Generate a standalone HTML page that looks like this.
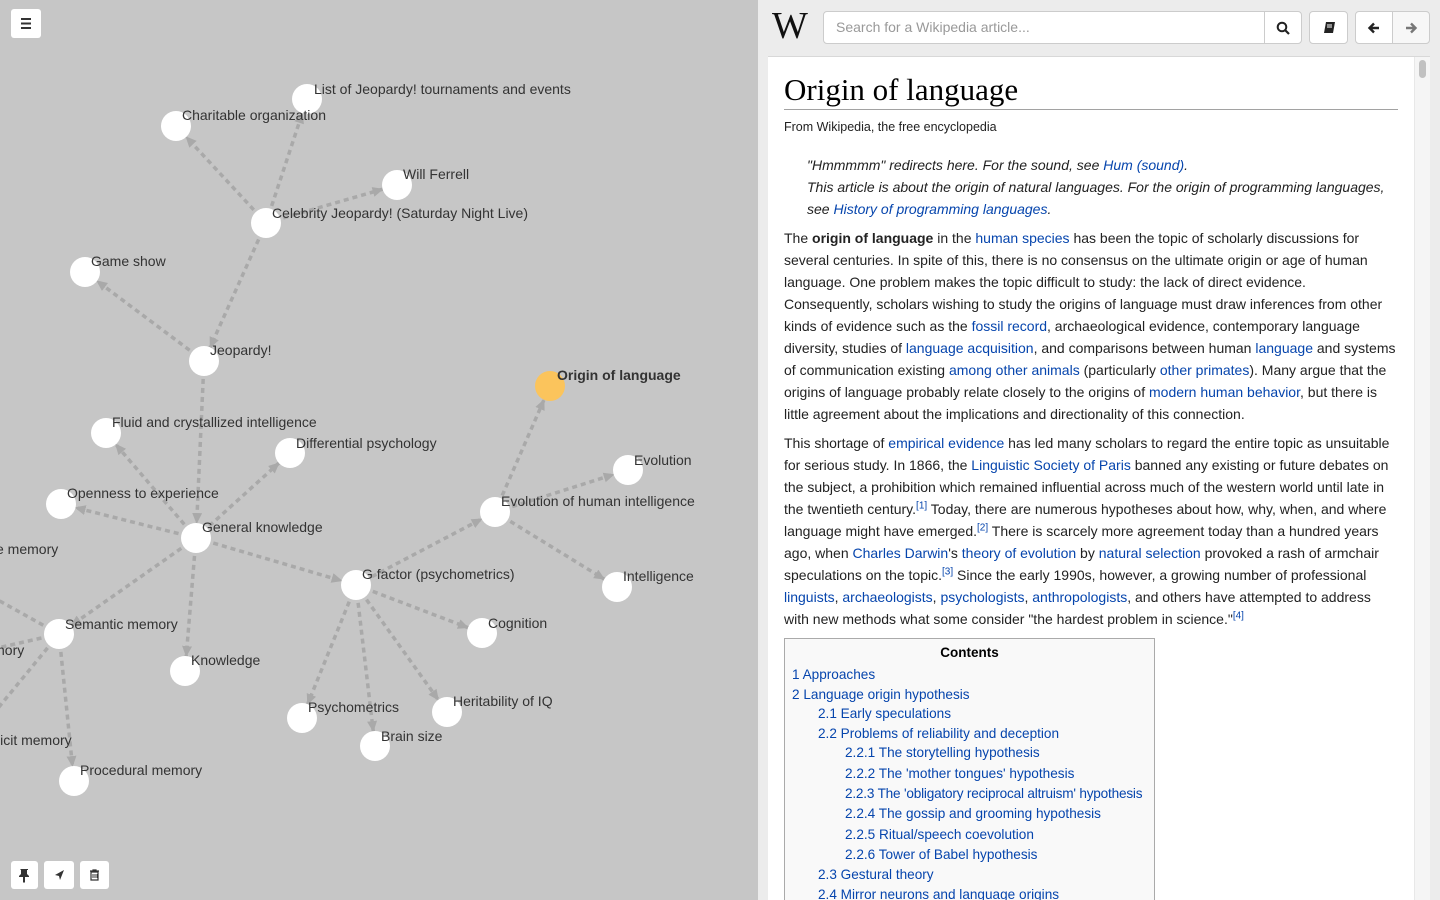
<!DOCTYPE html>
<html><head><meta charset="utf-8"><style>
*{margin:0;padding:0;box-sizing:border-box}
body{width:1440px;height:900px;overflow:hidden;font-family:"Liberation Sans",sans-serif;background:#ececec;position:relative}
#graph{position:absolute;left:0;top:0;width:758px;height:900px;background:#c6c6c6;overflow:hidden}
.btn{position:absolute;background:#fff;border-radius:3px}
#right{position:absolute;left:758px;top:0;width:682px;height:900px;background:#ececec}
.search{position:absolute;left:823px;top:11px;width:442px;height:33px;border:1px solid #ccc;border-radius:4px 0 0 4px;background:#fff;font-size:14px;color:#999;padding:7px 12px}
.tb{position:absolute;top:11px;height:33px;border:1px solid #ccc;background:#fff;display:flex;align-items:center;justify-content:center}
#page{position:absolute;left:768px;top:56px;width:662px;height:844px;background:#fff;border-top:1px solid #d8d8d8;overflow:hidden}
.c{position:absolute;left:16px;font-size:14px;color:#222;white-space:nowrap}
.l{line-height:22px}
a{color:#0645ad;text-decoration:none}
sup{font-size:10px;line-height:0}
h1{position:absolute;left:16px;top:15px;font-family:"Liberation Serif",serif;font-weight:normal;font-size:31px;color:#000}
.toc{position:absolute;left:16px;top:581px;width:371px;height:300px;background:#f9f9f9;border:1px solid #aaa;font-size:13.6px}
.toc div{position:absolute;white-space:nowrap}
</style></head><body>
<div id="graph">
<svg width="758" height="900" style="position:absolute;left:0;top:0">
<defs><marker id="a" markerUnits="userSpaceOnUse" markerWidth="12" markerHeight="12" refX="25" refY="5" orient="auto"><path d="M0,0L11,5L0,10z" fill="#a9a9a9"/></marker></defs>
<g stroke="#a9a9a9" stroke-width="3.5" stroke-dasharray="5,4" fill="none" marker-end="url(#a)">
<line x1="266" y1="223" x2="307" y2="99"/>
<line x1="266" y1="223" x2="176" y2="126"/>
<line x1="266" y1="223" x2="397" y2="185"/>
<line x1="266" y1="223" x2="204" y2="361"/>
<line x1="204" y1="361" x2="85" y2="272"/>
<line x1="204" y1="361" x2="196" y2="538"/>
<line x1="196" y1="538" x2="106" y2="433"/>
<line x1="196" y1="538" x2="290" y2="453"/>
<line x1="196" y1="538" x2="61" y2="504"/>
<line x1="196" y1="538" x2="356" y2="585"/>
<line x1="196" y1="538" x2="185" y2="671"/>
<line x1="196" y1="538" x2="59" y2="634"/>
<line x1="356" y1="585" x2="495" y2="512"/>
<line x1="495" y1="512" x2="550" y2="386"/>
<line x1="495" y1="512" x2="628" y2="470"/>
<line x1="495" y1="512" x2="617" y2="587"/>
<line x1="356" y1="585" x2="482" y2="633"/>
<line x1="356" y1="585" x2="302" y2="718"/>
<line x1="356" y1="585" x2="447" y2="712"/>
<line x1="356" y1="585" x2="375" y2="746"/>
<line x1="59" y1="634" x2="74" y2="781"/>
</g>
<g stroke="#a9a9a9" stroke-width="3.5" stroke-dasharray="5,4">
<line x1="59" y1="634" x2="-20" y2="590"/>
<line x1="59" y1="634" x2="-20" y2="652"/>
<line x1="59" y1="634" x2="-20" y2="730"/>
</g>
<g fill="#fff">
<circle cx="307" cy="99" r="15"/><circle cx="176" cy="126" r="15"/><circle cx="397" cy="185" r="15"/><circle cx="266" cy="223" r="15"/><circle cx="85" cy="272" r="15"/><circle cx="204" cy="361" r="15"/><circle cx="106" cy="433" r="15"/><circle cx="290" cy="453" r="15"/><circle cx="628" cy="470" r="15"/><circle cx="61" cy="504" r="15"/><circle cx="495" cy="512" r="15"/><circle cx="196" cy="538" r="15"/><circle cx="356" cy="585" r="15"/><circle cx="617" cy="587" r="15"/><circle cx="59" cy="634" r="15"/><circle cx="482" cy="633" r="15"/><circle cx="185" cy="671" r="15"/><circle cx="302" cy="718" r="15"/><circle cx="447" cy="712" r="15"/><circle cx="375" cy="746" r="15"/><circle cx="74" cy="781" r="15"/>
</g>
<circle cx="550" cy="386" r="15" fill="#fbc45c"/>
<g font-family="Liberation Sans,sans-serif" font-size="14" fill="#333">
<text x="314" y="94">List of Jeopardy! tournaments and events</text>
<text x="182" y="120">Charitable organization</text>
<text x="403" y="179">Will Ferrell</text>
<text x="272" y="218">Celebrity Jeopardy! (Saturday Night Live)</text>
<text x="91" y="266">Game show</text>
<text x="210" y="355">Jeopardy!</text>
<text x="557" y="380" font-weight="bold">Origin of language</text>
<text x="112" y="427">Fluid and crystallized intelligence</text>
<text x="296" y="448">Differential psychology</text>
<text x="634" y="465">Evolution</text>
<text x="67" y="498">Openness to experience</text>
<text x="501" y="506">Evolution of human intelligence</text>
<text x="202" y="532">General knowledge</text>
<text x="-4" y="554">e memory</text>
<text x="362" y="579">G factor (psychometrics)</text>
<text x="623" y="581">Intelligence</text>
<text x="65" y="629">Semantic memory</text>
<text x="-3" y="655">nory</text>
<text x="488" y="628">Cognition</text>
<text x="191" y="665">Knowledge</text>
<text x="308" y="712">Psychometrics</text>
<text x="453" y="706">Heritability of IQ</text>
<text x="381" y="741">Brain size</text>
<text x="-3" y="745">licit memory</text>
<text x="80" y="775">Procedural memory</text>
</g>
</svg>
<div class="btn" style="left:11px;top:9px;width:30px;height:29px"><svg width="30" height="29"><g stroke="#333" stroke-width="2"><line x1="10" y1="10" x2="20" y2="10"/><line x1="10" y1="14.5" x2="20" y2="14.5"/><line x1="10" y1="19" x2="20" y2="19"/></g></svg></div>
<div class="btn" style="left:11px;top:861px;width:27px;height:28px"><svg width="27" height="28"><path d="M10 8h7v1h-1v4l2 2v1h-4v5l-1 1-1-1v-5h-4v-1l2-2V9h-1z" fill="#333"/></svg></div>
<div class="btn" style="left:44px;top:861px;width:30px;height:28px"><svg width="30" height="28"><path d="M20 9L11 14l4 1 1 4z" fill="#333"/></svg></div>
<div class="btn" style="left:80px;top:861px;width:29px;height:28px"><svg width="29" height="28"><path d="M10 10h9M13 10V9h3v1M11 11h7v8h-7z" stroke="#333" stroke-width="1.2" fill="none"/><path d="M13 13v4M15 13v4M17 13v4" stroke="#333"/></svg></div>
</div>
<div id="right">
<div style="position:absolute;left:14px;top:4px;font-family:'Liberation Serif',serif;font-size:38px;color:#111">W</div>
</div>
<div class="search">Search for a Wikipedia article...</div>
<div class="tb" style="left:1264px;width:38px;border-radius:0 4px 4px 0"><svg width="14" height="14"><circle cx="6" cy="6" r="4.3" stroke="#222" stroke-width="2" fill="none"/><line x1="9" y1="9" x2="13" y2="13" stroke="#222" stroke-width="2.2"/></svg></div>
<div class="tb" style="left:1309px;width:39px;border-radius:4px"><svg width="14" height="14"><path d="M4 1h9l-2 11H2z" fill="#222"/><path d="M5 4h5M5 6h5" stroke="#fff"/></svg></div>
<div class="tb" style="left:1355px;width:38px;border-radius:4px 0 0 4px"><svg width="14" height="14"><path d="M12 7H3M7 2.5L2.5 7 7 11.5" stroke="#222" stroke-width="2.4" fill="none"/></svg></div>
<div class="tb" style="left:1392px;width:38px;border-radius:0 4px 4px 0;background:#f7f7f7"><svg width="14" height="14"><path d="M2 7h9M7 2.5L11.5 7 7 11.5" stroke="#777" stroke-width="2.4" fill="none"/></svg></div>
<div id="page">
<div style="position:absolute;right:0;top:0;width:16px;height:844px;background:#f5f5f5;border-left:1px solid #e8e8e8"></div>
<div style="position:absolute;right:4px;top:3px;width:7px;height:18px;background:#c1c1c1;border-radius:4px"></div>
<h1>Origin of language</h1>
<div style="position:absolute;left:16px;top:52px;width:614px;height:1px;background:#a2a2a2"></div>
<div class="c" style="top:63px;font-size:12.5px">From Wikipedia, the free encyclopedia</div>
<div class="c l" style="left:39px;top:97px;font-style:italic">"Hmmmmm" redirects here. For the sound, see <a>Hum (sound)</a>.<br>This article is about the origin of natural languages. For the origin of programming languages,<br>see <a>History of programming languages</a>.</div>
<div class="c l" style="top:170px">The <b>origin of language</b> in the <a>human species</a> has been the topic of scholarly discussions for<br>several centuries. In spite of this, there is no consensus on the ultimate origin or age of human<br>language. One problem makes the topic difficult to study: the lack of direct evidence.<br>Consequently, scholars wishing to study the origins of language must draw inferences from other<br>kinds of evidence such as the <a>fossil record</a>, archaeological evidence, contemporary language<br>diversity, studies of <a>language acquisition</a>, and comparisons between human <a>language</a> and systems<br>of communication existing <a>among other animals</a> (particularly <a>other primates</a>). Many argue that the<br>origins of language probably relate closely to the origins of <a>modern human behavior</a>, but there is<br>little agreement about the implications and directionality of this connection.</div>
<div class="c l" style="top:375px">This shortage of <a>empirical evidence</a> has led many scholars to regard the entire topic as unsuitable<br>for serious study. In 1866, the <a>Linguistic Society of Paris</a> banned any existing or future debates on<br>the subject, a prohibition which remained influential across much of the western world until late in<br>the twentieth century.<sup><a>[1]</a></sup> Today, there are numerous hypotheses about how, why, when, and where<br>language might have emerged.<sup><a>[2]</a></sup> There is scarcely more agreement today than a hundred years<br>ago, when <a>Charles Darwin</a>'s <a>theory of evolution</a> by <a>natural selection</a> provoked a rash of armchair<br>speculations on the topic.<sup><a>[3]</a></sup> Since the early 1990s, however, a growing number of professional<br><a>linguists</a>, <a>archaeologists</a>, <a>psychologists</a>, <a>anthropologists</a>, and others have attempted to address<br>with new methods what some consider "the hardest problem in science."<sup><a>[4]</a></sup></div>
<div class="toc">
<div style="left:0;width:369px;text-align:center;top:6px;font-weight:bold;color:#000;font-size:13.5px">Contents</div>
<div style="left:7px;top:28px"><a>1 Approaches</a></div>
<div style="left:7px;top:48px"><a>2 Language origin hypothesis</a></div>
<div style="left:33px;top:67px"><a>2.1 Early speculations</a></div>
<div style="left:33px;top:87px"><a>2.2 Problems of reliability and deception</a></div>
<div style="left:60px;top:106px"><a>2.2.1 The storytelling hypothesis</a></div>
<div style="left:60px;top:127px"><a>2.2.2 The 'mother tongues' hypothesis</a></div>
<div style="left:60px;top:147px;letter-spacing:-0.2px"><a>2.2.3 The 'obligatory reciprocal altruism' hypothesis</a></div>
<div style="left:60px;top:167px"><a>2.2.4 The gossip and grooming hypothesis</a></div>
<div style="left:60px;top:188px"><a>2.2.5 Ritual/speech coevolution</a></div>
<div style="left:60px;top:208px"><a>2.2.6 Tower of Babel hypothesis</a></div>
<div style="left:33px;top:228px"><a>2.3 Gestural theory</a></div>
<div style="left:33px;top:248px"><a>2.4 Mirror neurons and language origins</a></div>
</div>
</div>
</body></html>
